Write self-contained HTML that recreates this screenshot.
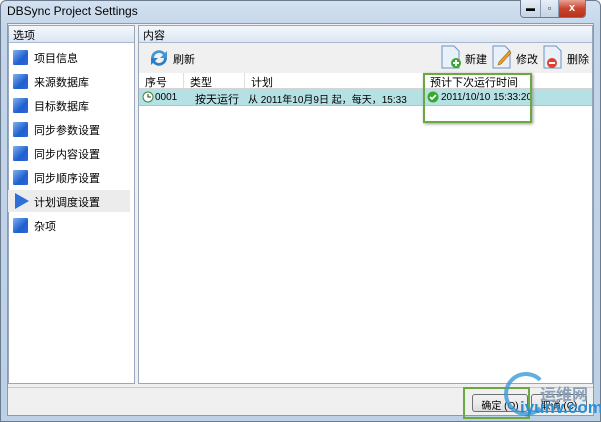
<!DOCTYPE html>
<html><head><meta charset="utf-8"><style>
*{margin:0;padding:0;box-sizing:border-box}
body{width:601px;height:422px;overflow:hidden;background:#fff;font-family:"Liberation Sans","Noto Sans CJK SC",sans-serif;font-size:11px;color:#000;position:relative}
.abs{position:absolute}
.win{left:0;top:0;width:601px;height:422px;background:linear-gradient(#d3e1f0,#c2d5ea 30px,#bcd0e6);border:1px solid #6b7a8c;border-radius:6px 6px 0 0}
.title{left:7px;top:4px;font-size:12px;color:#000}
.client{left:7px;top:23px;width:587px;height:393px;background:#f0f0f0;border:1px solid #8a9bb0}
.panel{background:#fff;border:1px solid #9aa7b8}
.hdr{left:0;top:0;right:0;height:17px;background:linear-gradient(#f4f8fc,#dbe6f3);border-bottom:1px solid #a9b8cc;padding:1px 4px;font-size:11px}
.ico{width:15px;height:15px;background:linear-gradient(135deg,#7fb2f0,#1f5fd0 60%,#2c6ad8);border-radius:1px}
.item{left:8px;height:22px;width:122px}
.item span{position:absolute;left:26px;top:4px}
.item .ico{position:absolute;left:5px;top:4px}
.th{top:73px;height:16px;border-bottom:1px solid #d5d5d5;border-right:1px solid #e0e0e0;padding:1px 6px;background:#fff}
.btn{height:18px;border:1px solid #707070;border-radius:3px;background:linear-gradient(#f2f2f2,#ebebeb 50%,#dcdcdc);text-align:center;padding-top:2px;font-size:10px}
</style></head><body>
<div class="abs win"></div>
<div class="abs title">DBSync Project Settings</div>
<div class="abs" style="left:520px;top:0;width:66px;height:18px;border:1px solid #6b7a8c;border-top:none;border-radius:0 0 4px 4px;overflow:hidden;display:flex">
 <div style="width:20px;background:linear-gradient(#e6eef8,#c4d3e6);border-right:1px solid #8a9bb0;text-align:center;font-size:9px;line-height:16px">▬</div>
 <div style="width:18px;background:linear-gradient(#e6eef8,#c4d3e6);border-right:1px solid #8a9bb0;text-align:center;font-size:9px;line-height:16px">▫</div>
 <div style="flex:1;background:linear-gradient(#e8a393,#c9452f 50%,#b8321c);color:#fff;text-align:center;font-size:11px;font-weight:bold;line-height:16px">x</div>
</div>
<div class="abs client"></div>
<div class="abs panel" style="left:8px;top:25px;width:127px;height:359px">
 <div class="abs hdr">选项</div>
</div>
<div class="abs item" style="top:46px"><div class="ico"></div><span>项目信息</span></div>
<div class="abs item" style="top:70px"><div class="ico"></div><span>来源数据库</span></div>
<div class="abs item" style="top:94px"><div class="ico"></div><span>目标数据库</span></div>
<div class="abs item" style="top:118px"><div class="ico"></div><span>同步参数设置</span></div>
<div class="abs item" style="top:142px"><div class="ico"></div><span>同步内容设置</span></div>
<div class="abs item" style="top:166px"><div class="ico"></div><span>同步顺序设置</span></div>
<div class="abs item" style="top:190px;background:#ececec"><svg style="position:absolute;left:6px;top:2px" width="16" height="18"><polygon points="1,1 15,9 1,17" fill="#2f6fd8"/></svg><span>计划调度设置</span></div>
<div class="abs item" style="top:214px"><div class="ico"></div><span>杂项</span></div>
<div class="abs panel" style="left:138px;top:25px;width:455px;height:359px">
 <div class="abs hdr">内容</div>
</div>
<div class="abs" style="left:139px;top:43px;width:453px;height:30px;background:#f0f0f0"></div>
<svg class="abs" style="left:146px;top:45px" width="26" height="26" viewBox="0 0 26 26"><path d="M5 13a8 8 0 0 1 14-5l2-2v7h-7l3-3a5 5 0 0 0-9 3z" fill="#3f95d6"/><path d="M21 13a8 8 0 0 1-14 5l-2 2v-7h7l-3 3a5 5 0 0 0 9-3z" fill="#2d7fc4"/></svg>
<div class="abs" style="left:173px;top:51px">刷新</div>
<svg class="abs" style="left:440px;top:45px" width="22" height="24"><path d="M2 1h12l5 5v17H2z" fill="#e8f0fa" stroke="#6f93c0"/><circle cx="16" cy="18" r="5" fill="#3aa830"/><path d="M16 15v6M13 18h6" stroke="#fff" stroke-width="2"/></svg>
<div class="abs" style="left:465px;top:51px">新建</div>
<svg class="abs" style="left:491px;top:45px" width="22" height="24"><path d="M2 1h12l5 5v17H2z" fill="#e8f0fa" stroke="#6f93c0"/><path d="M7 20l3-1 10-11-2-2-10 11z" fill="#f0a020" stroke="#a06010" stroke-width=".6"/></svg>
<div class="abs" style="left:516px;top:51px">修改</div>
<svg class="abs" style="left:542px;top:45px" width="22" height="24"><path d="M2 1h12l5 5v17H2z" fill="#e8f0fa" stroke="#6f93c0"/><circle cx="10" cy="18" r="5" fill="#e04030"/><path d="M7 18h6" stroke="#fff" stroke-width="2"/></svg>
<div class="abs" style="left:567px;top:51px">删除</div>
<div class="abs th" style="left:139px;width:45px">序号</div>
<div class="abs th" style="left:184px;width:61px">类型</div>
<div class="abs th" style="left:245px;width:179px">计划</div>
<div class="abs th" style="left:424px;width:168px;border-right:none">预计下次运行时间</div>
<div class="abs" style="left:139px;top:89px;width:453px;height:17px;background:#b5e1e5;border-bottom:1px solid #9cc"></div>
<svg class="abs" style="left:142px;top:91px" width="12" height="12"><circle cx="6" cy="6" r="5" fill="#fff" stroke="#3a8a30"/><path d="M6 3v3h3" stroke="#333" fill="none"/></svg>
<div class="abs" style="left:155px;top:92px;font-size:10px">0001</div>
<div class="abs" style="left:195px;top:91px">按天运行</div>
<div class="abs" style="left:248px;top:91px;font-size:10px">从 2011年10月9日 起，每天，15:33</div>
<svg class="abs" style="left:427px;top:91px" width="12" height="12"><circle cx="6" cy="6" r="5.5" fill="#3aa830"/><path d="M3 6l2 2 4-4" stroke="#fff" stroke-width="1.6" fill="none"/></svg>
<div class="abs" style="left:441px;top:92px;font-size:10px">2011/10/10 15:33:20</div>
<div class="abs" style="left:423px;top:73px;width:109px;height:50px;border:2px solid #6aa840;box-shadow:1px 1px 3px #999"></div>
<div class="abs" style="left:8px;top:387px;width:585px;height:1px;background:#c8c8c8"></div>
<div class="abs btn" style="left:472px;top:394px;width:56px">确定 (O)</div>
<div class="abs btn" style="left:531px;top:394px;width:56px">取消 (C)</div>
<div class="abs" style="left:463px;top:387px;width:67px;height:32px;border:2px solid #6aa840"></div>
<div class="abs" style="left:504px;top:372px;width:44px;height:44px;border:4px solid #3a9ad8;border-radius:50%;border-right-color:transparent;opacity:.8"></div>
<div class="abs" style="left:540px;top:381px;font-size:16px;color:#8aa0b8;font-weight:bold">运维网</div>
<div class="abs" style="left:520px;top:398px;font-size:17px;color:#2b8fd6;font-weight:bold">iyunv.com</div>
</body></html>
